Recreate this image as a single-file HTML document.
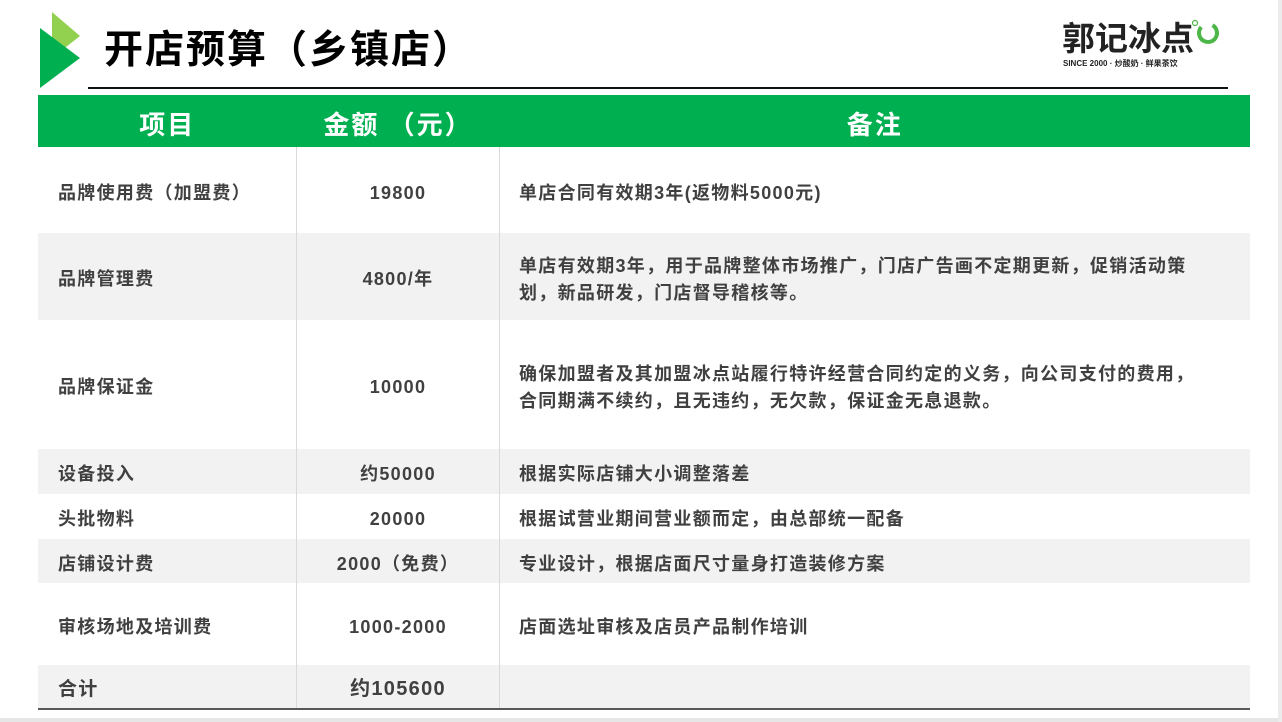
<!DOCTYPE html>
<html><head><meta charset="utf-8"><style>
body{margin:0;width:1282px;height:722px;background:#fff;position:relative;overflow:hidden;font-family:"Liberation Sans","Noto Sans CJK SC",sans-serif;}
.abs{position:absolute}
.title{left:104px;top:26px;font-size:39px;font-weight:bold;color:#000;letter-spacing:2px;line-height:50px}
table{position:absolute;left:38px;top:95px;width:1212px;border-collapse:collapse;font-weight:bold;color:#404040;font-size:18px;letter-spacing:1.3px}
th{background:#00b050;color:#fff;font-size:26px;height:52px;padding:0;letter-spacing:2px}
td{padding:0;border-right:1px solid #d9d9d9;vertical-align:middle;line-height:27px}
td:last-child{border-right:none}
td.c1{padding-left:20px;width:238px}
td.c2{text-align:center;width:202px}
td.c3{padding-left:19px;padding-right:30px}
tr.g td{background:#f2f2f2}
span{position:relative;top:3px;display:inline-block}
th span{top:2px}
</style></head><body>
<svg class="abs" style="left:38px;top:10px" width="44" height="80">
<polygon points="14,2 42,26 14,48" fill="#92d050"/>
<polygon points="2,18 42,48 2,78" fill="#00b050"/>
</svg>
<div class="abs title">开店预算（乡镇店）</div>
<div class="abs" style="left:88px;top:87px;width:1140px;height:2px;background:#111"></div>
<div class="abs" style="left:1062px;top:20px;font-size:33px;font-weight:bold;color:#222;line-height:38px">郭记冰点</div>
<svg class="abs" style="left:1190px;top:18px" width="34" height="30"><circle cx="18" cy="15" r="9" fill="none" stroke="#4cb748" stroke-width="4" stroke-dasharray="44 13" transform="rotate(-60 18 15)"/><circle cx="5" cy="5" r="2.5" fill="none" stroke="#4cb748" stroke-width="1.2"/></svg>
<div class="abs" style="left:1063px;top:58px;font-size:8px;font-weight:bold;color:#222;white-space:nowrap">SINCE 2000 · 炒酸奶 · 鲜果茶饮</div>
<table>
<tr><th style="width:258px"><span>项目</span></th><th style="width:202px"><span>金额 （元）</span></th><th><span>备注</span></th></tr>
<tr style="height:86px"><td class="c1"><span>品牌使用费（加盟费）</span></td><td class="c2"><span>19800</span></td><td class="c3"><span>单店合同有效期3年(返物料5000元)</span></td></tr>
<tr class="g" style="height:87px"><td class="c1"><span>品牌管理费</span></td><td class="c2"><span>4800/年</span></td><td class="c3"><span>单店有效期3年，用于品牌整体市场推广，门店广告画不定期更新，促销活动策<br>划，新品研发，门店督导稽核等。</span></td></tr>
<tr style="height:129px"><td class="c1"><span>品牌保证金</span></td><td class="c2"><span>10000</span></td><td class="c3"><span>确保加盟者及其加盟冰点站履行特许经营合同约定的义务，向公司支付的费用，<br>合同期满不续约，且无违约，无欠款，保证金无息退款。</span></td></tr>
<tr class="g" style="height:45px"><td class="c1"><span>设备投入</span></td><td class="c2"><span>约50000</span></td><td class="c3"><span>根据实际店铺大小调整落差</span></td></tr>
<tr style="height:45px"><td class="c1"><span>头批物料</span></td><td class="c2"><span>20000</span></td><td class="c3"><span>根据试营业期间营业额而定，由总部统一配备</span></td></tr>
<tr class="g" style="height:44px"><td class="c1"><span>店铺设计费</span></td><td class="c2"><span>2000（免费）</span></td><td class="c3"><span>专业设计，根据店面尺寸量身打造装修方案</span></td></tr>
<tr style="height:82px"><td class="c1"><span>审核场地及培训费</span></td><td class="c2"><span>1000-2000</span></td><td class="c3"><span>店面选址审核及店员产品制作培训</span></td></tr>
<tr class="g" style="height:44px;border-bottom:2px solid #595959"><td class="c1" style="font-size:19px"><span>合计</span></td><td class="c2" style="font-size:20px"><span>约105600</span></td><td class="c3"></td></tr>
</table>
<div class="abs" style="left:0;top:718px;width:1282px;height:4px;background:#e6e6e6"></div>
<div class="abs" style="left:1278px;top:0;width:4px;height:722px;background:#ececec"></div>
</body></html>
